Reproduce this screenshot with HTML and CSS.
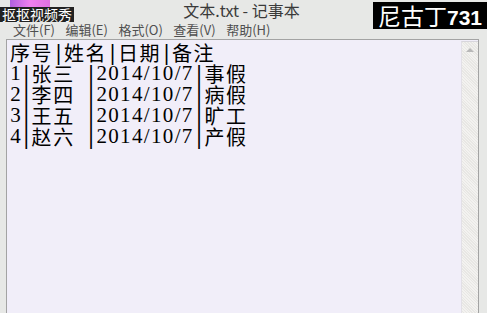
FILE: index.html
```html
<html>
<head>
  <meta charset="UTF-8">
  <title>文本.txt - 记事本</title>
  <link rel="stylesheet" href="styles.css">
</head>
<body>

  <div class="window">

    <div class="titlebar">
      <span class="title">文本.txt - 记事本</span>
    </div>

    <div class="menubar">
      <span class="menu">文件(F)</span>
      <span class="menu">编辑(E)</span>
      <span class="menu">格式(O)</span>
      <span class="menu">查看(V)</span>
      <span class="menu">帮助(H)</span>
    </div>

    <div class="editor">
      <div class="text">
        <div class="line"><span class="cn">序号</span><span class="bar">|</span><span class="cn">姓名</span><span class="bar">|</span><span class="cn">日期</span><span class="bar">|</span><span class="cn">备注</span></div>
        <div class="line"><span class="ch">1</span><span class="bar">|</span><span class="cn">张三</span><span class="ch"> </span><span class="bar">|</span><span class="date">2014/10/7</span><span class="bar">|</span><span class="cn">事假</span></div>
        <div class="line"><span class="ch">2</span><span class="bar">|</span><span class="cn">李四</span><span class="ch"> </span><span class="bar">|</span><span class="date">2014/10/7</span><span class="bar">|</span><span class="cn">病假</span></div>
        <div class="line"><span class="ch">3</span><span class="bar">|</span><span class="cn">王五</span><span class="ch"> </span><span class="bar">|</span><span class="date">2014/10/7</span><span class="bar">|</span><span class="cn">旷工</span></div>
        <div class="line"><span class="ch">4</span><span class="bar">|</span><span class="cn">赵六</span><span class="ch"> </span><span class="bar">|</span><span class="date">2014/10/7</span><span class="bar">|</span><span class="cn">产假</span></div>
      </div>
      <div class="scrollbar">
        <div class="arrow"></div>
      </div>
    </div>

  </div>

  <!-- overlays from the screen recorder -->
  <div class="rec-icon"></div>
  <div class="rec-label">抠抠视频秀</div>
  <div class="watermark">尼古丁<b>731</b></div>

</body>
</html>
```

FILE: styles.css
```css
body{
  margin: 0;
  width: 487px;
  height: 313px;
  overflow: hidden;
  background: #e7e8e6;
  font-family: "Noto Sans CJK SC", "Noto Sans", sans-serif;
}
.window{
  display: flex;
  flex-direction: column;
  height: 313px;
}
.titlebar{
  height: 20px;
  display: flex;
  justify-content: center;
  align-items: center;
}
.title{
  font-size: 16px;
  color: #3a3a3a;
  margin-right: 4px;
  line-height: 20px;
}
.menubar{
  height: 19px;
  display: flex;
  align-items: center;
  padding-left: 13px;
  gap: 10.5px;
}
.menu{
  font-size: 13px;
  color: #4f4f4f;
  line-height: 15px;
}
.editor{
  flex: 1;
  display: flex;
  margin: 0 8px 0 6px;
  border: 1px solid #a3a3a3;
  border-bottom: none;
  background: #f1eef9;
}
.text{
  flex: 1;
  padding: 2px 0 0 3px;
  font-family: "Liberation Serif", serif;
  font-size: 21px;
  color: #000;
}
.line{
  height: 21px;
  line-height: 21px;
  white-space: pre;
}
.ch, .bar, .cn, .date{
  display: inline-block;
  height: 21px;
  vertical-align: top;
}
.ch, .bar{
  width: 10.8px;
  text-align: center;
}
.bar{
  font-size: 23px;
  font-weight: bold;
  color: #000;
}
.date{
  width: 97.2px;
  letter-spacing: 1.35px;
}
.cn{
  font-family: "Noto Sans CJK SC", sans-serif;
  font-size: 20px;
  letter-spacing: 1.6px;
}
.scrollbar{
  width: 16px;
  margin-top: 1px;
  border-left: 1px solid #e2e0e6;
  border-top: 1px solid #d8d6dc;
  background: #ebeae8;
  background-image: repeating-linear-gradient(45deg, #f3f2f0 0 1px, #e8e7e4 1px 2px);
}
.arrow{
  width: 0;
  height: 0;
  margin: 6px auto 0;
  border-left: 4px solid transparent;
  border-right: 4px solid transparent;
  border-bottom: 4px solid #b8b8b8;
}
.rec-icon{
  position: absolute;
  left: 10px;
  top: 0;
  width: 40px;
  height: 8px;
  background: linear-gradient(to right, #b060e0, #f080f0, #e070e0);
}
.rec-label{
  position: absolute;
  left: 0;
  top: 7px;
  height: 15px;
  padding: 0 2px;
  background: #222;
  color: #fff;
  font-size: 14px;
  line-height: 15px;
}
.watermark{
  position: absolute;
  right: 0;
  top: 2px;
  width: 114px;
  height: 27px;
  background: #000;
  color: #fff;
  font-size: 23px;
  line-height: 27px;
  text-align: center;
}
.watermark b{
  font-family: "Liberation Sans", sans-serif;
  font-size: 21px;
}
```
